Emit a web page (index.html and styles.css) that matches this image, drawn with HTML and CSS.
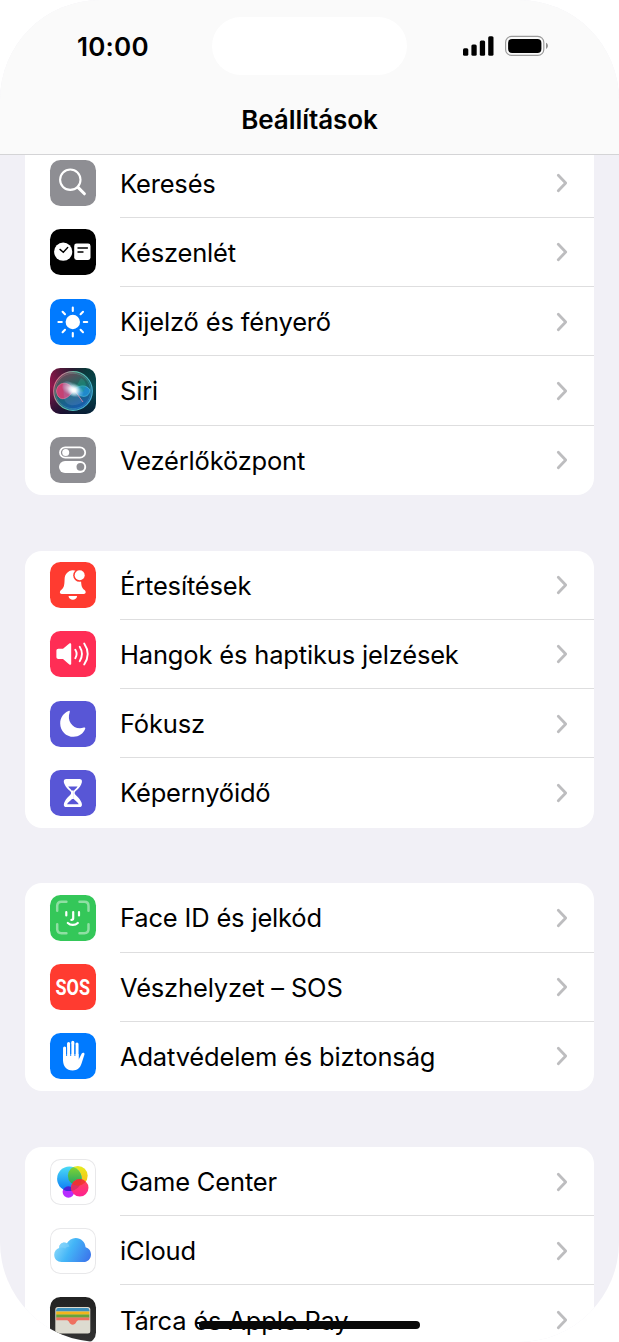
FILE: index.html
```
<!DOCTYPE html>
<html lang="hu">
<head>
    <meta charset="UTF-8">
    <meta name="viewport" content="width=device-width, initial-scale=1.0">
    <title>Beállítások</title>
    <link rel="stylesheet" href="styles.css">
</head>
<body>
    <svg class="symbols" width="0" height="0">
        <symbol id="chevron" viewBox="0 0 12 20">
            <path d="M2.3 2.3l7.4 7.7-7.4 7.7" fill="none" stroke="#bdbdbf" stroke-width="2.8" stroke-linecap="round" stroke-linejoin="round"/>
        </symbol>
    </svg>
    <div class="phone">
        <header class="header">
            <div class="status">
                <span class="time">10:00</span>
                <div class="island"></div>
                <svg class="indicators" width="87" height="22" viewBox="0 0 87 22">
                    <rect x="1" y="13.2" width="5.3" height="7.6" rx="1.5"/>
                    <rect x="9.4" y="9.5" width="5.3" height="11.3" rx="1.5"/>
                    <rect x="17.8" y="5.5" width="5.3" height="15.3" rx="1.5"/>
                    <rect x="26.2" y="1.2" width="5.3" height="19.6" rx="1.5"/>
                    <rect x="43.6" y="1.4" width="38.2" height="19" rx="6" fill="none" stroke="#9b9b9b" stroke-width="1.2"/>
                    <rect x="46.1" y="3.9" width="33.3" height="14" rx="4"/>
                    <path d="M84 7.8c2.6 1.3 2.6 4.9 0 6.2z" fill="#8f8f8f"/>
                </svg>
            </div>
            <h1>Beállítások</h1>
        </header>

        <main class="list">
            <ul class="group">
                <li>
                    <svg class="icon gray" viewBox="0 0 46 46">
                        <circle cx="20.3" cy="19.7" r="10.2" fill="none" stroke="#fff" stroke-width="2.1"/>
                        <path d="M28 27.4l6.4 6.4" stroke="#fff" stroke-width="3" stroke-linecap="round"/>
                    </svg>
                    <div class="label">Keresés<svg class="chevron"><use href="#chevron"/></svg></div>
                </li>
                <li>
                    <svg class="icon black" viewBox="0 0 46 46">
                        <circle cx="13.2" cy="22.7" r="9.1" fill="#fff"/>
                        <path d="M10 20.4l3.3 2.8 4.4-4.6" fill="none" stroke="#000" stroke-width="1.4" stroke-linecap="round"/>
                        <rect x="24.2" y="14.6" width="16.3" height="16.3" rx="2.3" fill="#fff"/>
                        <path d="M28 19h9.4M28 23h5" stroke="#000" stroke-width="1.4" stroke-linecap="round"/>
                    </svg>
                    <div class="label">Készenlét<svg class="chevron"><use href="#chevron"/></svg></div>
                </li>
                <li>
                    <svg class="icon blue" viewBox="0 0 46 46">
                        <circle cx="22.8" cy="23" r="7.2" fill="#fff"/>
                        <path d="M22.8 8.6v3.4M22.8 34v3.4M8.4 23h3.4M33.8 23h3.4M12.6 12.8l2.4 2.4M30.6 30.8l2.4 2.4M12.6 33.2l2.4-2.4M30.6 15.2l2.4-2.4" stroke="#fff" stroke-width="2.1" stroke-linecap="round"/>
                    </svg>
                    <div class="label">Kijelző és fényerő<svg class="chevron"><use href="#chevron"/></svg></div>
                </li>
                <li>
                    <svg class="icon" viewBox="0 0 46 46">
                        <defs>
                            <linearGradient id="siriBg" x1="0" y1="0.35" x2="1" y2="0.55">
                                <stop offset="0" stop-color="#9a164e"/>
                                <stop offset="0.4" stop-color="#3a1b3c"/>
                                <stop offset="0.7" stop-color="#0c4446"/>
                                <stop offset="1" stop-color="#074a52"/>
                            </linearGradient>
                            <linearGradient id="siriRing" x1="0" y1="0.2" x2="1" y2="0.6">
                                <stop offset="0" stop-color="#f05f87"/>
                                <stop offset="0.45" stop-color="#5cc4a6"/>
                                <stop offset="1" stop-color="#45aed6"/>
                            </linearGradient>
                            <linearGradient id="siriOrb" x1="0.2" y1="0" x2="0.6" y2="1">
                                <stop offset="0" stop-color="#7b4257"/>
                                <stop offset="0.45" stop-color="#1c6862"/>
                                <stop offset="1" stop-color="#175bb4"/>
                            </linearGradient>
                            <radialGradient id="siriGlow">
                                <stop offset="0" stop-color="#fff"/>
                                <stop offset="0.25" stop-color="#fff" stop-opacity="0.8"/>
                                <stop offset="1" stop-color="#b7e9ff" stop-opacity="0"/>
                            </radialGradient>
                            <linearGradient id="siriDark" x1="0" y1="0" x2="0" y2="1">
                                <stop offset="0" stop-color="#021b18" stop-opacity="0.3"/>
                                <stop offset="0.4" stop-color="#061c28" stop-opacity="0"/>
                                <stop offset="1" stop-color="#080b2c" stop-opacity="0.7"/>
                            </linearGradient>
                        </defs>
                        <rect width="46" height="46" fill="url(#siriBg)"/>
                        <rect width="46" height="46" fill="url(#siriDark)"/>
                        <circle cx="23" cy="23" r="19.3" fill="url(#siriOrb)" stroke="url(#siriRing)" stroke-width="1.2"/>
                        <circle cx="23" cy="23" r="17.7" fill="none" stroke="url(#siriRing)" stroke-width="0.6" opacity="0.6"/>
                        <path d="M24 22C17 11 7 15 6.5 23c.5 9 9 12 17.5-1z" fill="#e43b75" fill-opacity="0.85" stroke="#ff7fa1" stroke-width="0.6"/>
                        <path d="M23 22c6-5 13-6 17 0-1 8-9 9-17 0z" fill="#2190d7" fill-opacity="0.85" stroke="#55c7e8" stroke-width="0.6"/>
                        <path d="M13 15c5-5 10 0 12 7l8 12c-10 6-17 3-19-3z" fill="#8ba5db" fill-opacity="0.2"/>
                        <path d="M24 22l7-12c5 3 7 8 2 14z" fill="#22a187" fill-opacity="0.4"/>
                        <path d="M25 23l8 11" stroke="#ca88ae" stroke-width="0.9"/>
                        <ellipse cx="22.5" cy="21.5" rx="12" ry="7" fill="url(#siriGlow)" transform="rotate(25 22.5 22)"/>
                        <circle cx="24" cy="22.3" r="6.5" fill="url(#siriGlow)"/>
                    </svg>
                    <div class="label">Siri<svg class="chevron"><use href="#chevron"/></svg></div>
                </li>
                <li>
                    <svg class="icon gray" viewBox="0 0 46 46">
                        <rect x="10" y="10.3" width="25.2" height="10.4" rx="5.2" fill="none" stroke="#fff" stroke-width="1.8"/>
                        <circle cx="15.7" cy="15.5" r="3.5" fill="#fff"/>
                        <rect x="9" y="23.9" width="27.2" height="12" rx="6" fill="#fff"/>
                        <circle cx="30.4" cy="29.8" r="3.9" fill="#8e8e93"/>
                    </svg>
                    <div class="label">Vezérlőközpont<svg class="chevron"><use href="#chevron"/></svg></div>
                </li>
            </ul>

            <ul class="group">
                <li>
                    <svg class="icon red" viewBox="0 0 46 46">
                        <path d="M22.8 8.3c-4.8.4-8 3.9-8.2 8.6-.2 6.5-.6 8.8-3.5 11.2-1.7 1.5-1.6 3.8.6 3.8h22.2c2.2 0 2.3-2.3.6-3.8-2.9-2.4-3.3-4.7-3.5-11.2 0-5-3-8.3-8.2-8.6z" fill="#fff"/>
                        <circle cx="29.7" cy="13.3" r="6.5" fill="#ff3b30"/>
                        <circle cx="29.7" cy="13.3" r="5" fill="#fff"/>
                        <path d="M18.5 34h8.6c-.5 5-8 5-8.6 0z" fill="#fff"/>
                    </svg>
                    <div class="label">Értesítések<svg class="chevron"><use href="#chevron"/></svg></div>
                </li>
                <li>
                    <svg class="icon pink" viewBox="0 0 46 46">
                        <path d="M8.4 17.7H13l6.3-5.2c.9-.7 1.9-.3 1.9.8v19.4c0 1.1-1 1.5-1.9.8L13 28H8.4c-1.3 0-2-.7-2-2v-6.3c0-1.3.7-2 2-2z" fill="#fff"/>
                        <path d="M25.3 18.8c1.7 2.7 1.7 5.7 0 8.4M29.7 15.8c2.9 4.6 2.9 9.8 0 14.4M34.2 12.5c4.4 6.6 4.4 14.4 0 21" fill="none" stroke="#fff" stroke-width="1.9" stroke-linecap="round"/>
                    </svg>
                    <div class="label">Hangok és haptikus jelzések<svg class="chevron"><use href="#chevron"/></svg></div>
                </li>
                <li>
                    <svg class="icon indigo" viewBox="0 0 46 46">
                        <path d="M18.6 10c.9-.4 1.5.2 1.1 1.2-3.500 9.500 4.300 18.500 14.200 15.400 1-.3 1.600.3 1.300 1.200C33.400 32.600 28.800 35.800 23.600 35.800c-7.500 0-13.400-5.900-13.400-13.400C10.200 16.700 13.600 11.900 18.600 10z" fill="#fff"/>
                    </svg>
                    <div class="label">Fókusz<svg class="chevron"><use href="#chevron"/></svg></div>
                </li>
                <li>
                    <svg class="icon indigo" viewBox="0 0 46 46">
                        <path d="M16.2 9h13.4c3 0 2.7 3.2 1.5 5.4-1.2 2.9-3.4 4.6-5.4 6.6-1.4 1.4-1.4 2.7 0 4.1 2 2 4.200 3.700 5.400 6.600 1.200 2.200 1.500 5.300-1.500 5.300H16.200c-3 0-2.700-3.100-1.500-5.300 1.200-2.900 3.400-4.600 5.400-6.600 1.400-1.400 1.400-2.700 0-4.100-2-2-4.200-3.700-5.400-6.600C13.500 12.200 13.200 9 16.200 9z" fill="#fff"/>
                        <path d="M18.2 16.5h9.4c-1.3 2-3.900 3.200-4.100 5.500v6.300c.5 2.100 3.500 2.700 5.200 5.900H17.100c1.700-3.200 4.700-3.800 5.200-5.900V22c-.2-2.300-2.800-3.500-4.100-5.500z" fill="#5856d6"/>
                        <path d="M22.900 20.5v8.500" stroke="#fff" stroke-width="1.8"/>
                    </svg>
                    <div class="label">Képernyőidő<svg class="chevron"><use href="#chevron"/></svg></div>
                </li>
            </ul>

            <ul class="group">
                <li>
                    <svg class="icon green" viewBox="0 0 46 46">
                        <path d="M7.2 15.8V11c0-3 1.2-4.2 4.2-4.2h5M29.5 6.8h4.8c3 0 4.2 1.2 4.2 4.2v4.800M38.500 29.200V34c0 3-1.200 4.200-4.200 4.200h-4.800M16.400 38.200h-5c-3 0-4.200-1.200-4.200-4.200v-4.800" fill="none" stroke="#8fdfa3" stroke-width="2.5" stroke-linecap="round"/>
                        <path d="M16.300 17.200v3.200M29 17.200v3.200M23.200 17v6.300c0 1.100-.6 1.600-1.800 1.600M17.800 28c2.700 2.500 7.300 2.500 10 0" fill="none" stroke="#fff" stroke-width="2.2" stroke-linecap="round"/>
                    </svg>
                    <div class="label">Face ID és jelkód<svg class="chevron"><use href="#chevron"/></svg></div>
                </li>
                <li>
                    <svg class="icon red" viewBox="0 0 46 46">
                        <text class="sos" x="5.5" y="31" textLength="34.5" lengthAdjust="spacingAndGlyphs">SOS</text>
                    </svg>
                    <div class="label">Vészhelyzet – SOS<svg class="chevron"><use href="#chevron"/></svg></div>
                </li>
                <li>
                    <svg class="icon blue" viewBox="0 0 46 46">
                        <path d="M14.6 15v12M18.6 10.5V25M22.8 9.3V25M27 11v15" stroke="#fff" stroke-width="3.1" stroke-linecap="round"/>
                        <path d="M13.05 21h15.5v5.700l3.200-6.200c.8-1.500 3.300-.9 2.700 1l-3 9.300c-1.500 4.400-4.300 6.600-8.700 6.600-6.500 0-9.700-4-9.700-10.400z" fill="#fff"/>
                        <path d="M16.6 14.500V23M20.700 11v12M24.900 11.500V23" stroke="#007aff" stroke-width="0.9"/>
                    </svg>
                    <div class="label">Adatvédelem és biztonság<svg class="chevron"><use href="#chevron"/></svg></div>
                </li>
            </ul>

            <ul class="group">
                <li>
                    <svg class="icon white" viewBox="0 0 46 46">
                        <defs>
                            <linearGradient id="gcBlue" x1="0" y1="0" x2="0" y2="1">
                                <stop offset="0" stop-color="#4cdcf5"/>
                                <stop offset="1" stop-color="#0a78f5"/>
                            </linearGradient>
                            <linearGradient id="gcGreen" x1="0" y1="0" x2="0" y2="1">
                                <stop offset="0" stop-color="#88d52e"/>
                                <stop offset="1" stop-color="#18a36a"/>
                            </linearGradient>
                            <linearGradient id="gcYellow" x1="0" y1="0" x2="0" y2="1">
                                <stop offset="0" stop-color="#e4ec20"/>
                                <stop offset="1" stop-color="#ffb916"/>
                            </linearGradient>
                            <linearGradient id="gcPink" x1="0" y1="0" x2="0" y2="1">
                                <stop offset="0" stop-color="#ff4b52"/>
                                <stop offset="1" stop-color="#ff2093"/>
                            </linearGradient>
                            <clipPath id="gcClip"><circle cx="19.4" cy="19.8" r="12.3"/></clipPath>
                            <clipPath id="gcClipTop"><circle cx="27.8" cy="16.8" r="9.9"/></clipPath>
                        </defs>
                        <circle cx="18.4" cy="33" r="5.8" fill="#b72cff"/>
                        <circle cx="27.8" cy="16.8" r="9.9" fill="url(#gcYellow)"/>
                        <circle cx="19.4" cy="19.8" r="12.3" fill="url(#gcBlue)"/>
                        <circle cx="18.4" cy="33" r="5.8" fill="#4a23d8" clip-path="url(#gcClip)"/>
                        <circle cx="27.8" cy="16.8" r="9.9" fill="url(#gcGreen)" clip-path="url(#gcClip)"/>
                        <circle cx="29.8" cy="28.8" r="8.7" fill="url(#gcPink)"/>
                        <circle cx="29.8" cy="28.8" r="8.7" fill="#dc2f62" clip-path="url(#gcClip)"/>
                        <circle cx="29.8" cy="28.8" r="8.7" fill="#ee3628" opacity="0.8" clip-path="url(#gcClipTop)"/>
                    </svg>
                    <div class="label">Game Center<svg class="chevron"><use href="#chevron"/></svg></div>
                </li>
                <li>
                    <svg class="icon white" viewBox="0 0 46 46">
                        <defs>
                            <linearGradient id="cloud" x1="0" y1="0.3" x2="1" y2="0.65">
                                <stop offset="0" stop-color="#8edbfb"/>
                                <stop offset="0.45" stop-color="#43b5f7"/>
                                <stop offset="1" stop-color="#3c79ec"/>
                            </linearGradient>
                        </defs>
                        <path d="M11.5 34C7.3 34 4.2 31 4.2 26.8c0-3.4 2-6 4.9-6.9 0-3.2 2.4-5.3 5.2-5.3 1 0 1.8.2 2.6.7C18.6 12 22 9.900 25.600 9.900c5.400 0 9.600 4 10 9.300 3.200.8 5.400 3.600 5.400 7.200 0 4.300-3.200 7.600-7.500 7.600z" fill="url(#cloud)"/>
                        <path d="M9.1 19.9c0-3.2 2.4-5.3 5.2-5.3 2.8 0 5 1.800 5.100 4.200-1.700-.3-3.300.4-4.100 1.900-1.600-1.200-4-1.500-6.200-.8z" fill="#8fd8fa" opacity="0.45"/>
                    </svg>
                    <div class="label">iCloud<svg class="chevron"><use href="#chevron"/></svg></div>
                </li>
                <li>
                    <svg class="icon dark" viewBox="0 0 46 46">
                        <rect x="5.3" y="10" width="35" height="26.5" rx="2.5" fill="#dddbd0"/>
                        <path d="M6.2 13.3q0-2.2 2.2-2.2h28.8q2.2 0 2.2 2.2v1.200H6.200z" fill="#3f91bd"/>
                        <path d="M6.2 14.5h33.2v3.3H6.2z" fill="#f3b51c"/>
                        <path d="M6.2 17.5h33.2v3.3H6.2z" fill="#67a43b"/>
                        <path d="M6.2 20.5h33.2v2.7H29c-1.4 0-2 .6-2.7 1.9-1.5 3.6-5.7 3.6-7.2 0-.7-1.3-1.3-1.9-2.7-1.900H6.200z" fill="#ef7160"/>
                    </svg>
                    <div class="label">Tárca és Apple Pay<svg class="chevron"><use href="#chevron"/></svg></div>
                </li>
            </ul>
        </main>
        <div class="home-bar"></div>
    </div>
</body>
</html>
```
FILE: styles.css
```
* {
    box-sizing: border-box;
}
body {
    margin: 0;
    background-color: #fff;
    color: #000;
    font-family: Inter, "Liberation Sans", sans-serif;
}
.symbols {
    display: none;
}
.phone {
    position: relative;
    display: flex;
    flex-direction: column;
    height: 1342px;
    overflow: hidden;
    border-radius: 100px;
    background-color: #f1f0f6;
}
.header {
    flex: none;
    height: 155px;
    padding-top: 17px;
    border-bottom: 1px solid #d4d4d6;
    background-color: #fafafa;
}
.status {
    display: grid;
    grid-template-columns: 1fr 195px 1fr;
    align-items: center;
    height: 58px;
}
.time {
    padding-left: 77px;
    font-size: 26px;
    font-weight: 600;
    letter-spacing: 0.2px;
}
.island {
    height: 58px;
    border-radius: 29px;
    background-color: #fff;
}
.indicators {
    margin-left: 55px;
}
h1 {
    margin: 29px 0 0;
    font-size: 26px;
    font-weight: 600;
    line-height: 32px;
    letter-spacing: -0.05px;
    text-align: center;
}
.list {
    flex: 1;
    min-height: 0;
    overflow: hidden;
    padding: 0 25px;
}
.group {
    margin: 0 0 55.8px;
    padding: 0;
    overflow: hidden;
    list-style: none;
    border-radius: 17px;
    background-color: #fff;
}
.group:first-child {
    margin-top: -6.5px;
    border-radius: 0 0 17px 17px;
}
li {
    display: flex;
    align-items: center;
    height: 69.25px;
    padding-left: 25px;
}
.icon {
    flex: none;
    width: 46px;
    height: 46px;
    margin-right: 24px;
    border-radius: 10.5px;
}
.label {
    display: flex;
    flex: 1;
    align-items: center;
    justify-content: space-between;
    height: 100%;
    padding: 1px 26px 0 0;
    border-bottom: 1px solid #dededf;
    font-size: 25.5px;
    letter-spacing: -0.17px;
}
.chevron {
    width: 12px;
    height: 20px;
}
li:last-child .label {
    border-bottom-color: transparent;
}
.gray {
    background-color: #8e8e93;
}
.black {
    background-color: #000;
}
.blue {
    background-color: #007aff;
}
.red {
    background-color: #ff3b30;
}
.pink {
    background-color: #ff2d55;
}
.indigo {
    background-color: #5856d6;
}
.green {
    background-color: #34c759;
}
.white {
    background-color: #fff;
    box-shadow: inset 0 0 0 1px #e8e8ea;
}
.dark {
    background-image: linear-gradient(#222, #333);
}
.sos {
    fill: #fff;
    font-family: Roboto, sans-serif;
    font-size: 22px;
    font-weight: 700;
}
.home-bar {
    position: absolute;
    left: 199px;
    bottom: 13px;
    width: 221px;
    height: 8px;
    border-radius: 4px;
    background-color: #080808;
}
```
